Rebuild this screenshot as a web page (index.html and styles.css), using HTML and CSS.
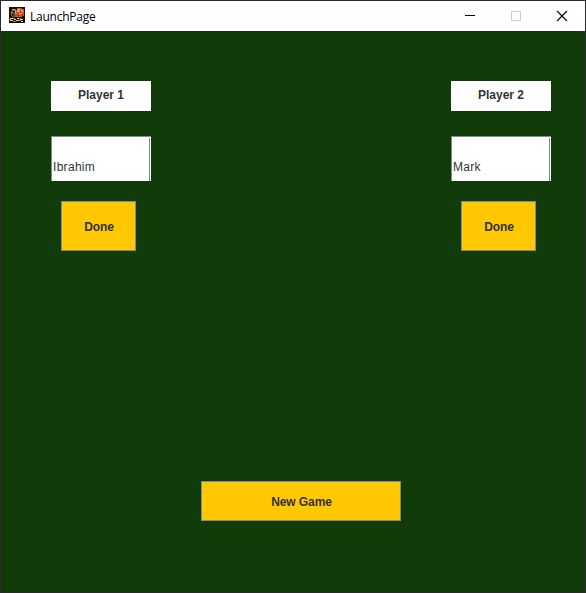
FILE: index.html
```html
<!DOCTYPE html>
<html lang="en">
<head>
<meta charset="utf-8">
<title>LaunchPage</title>
<link rel="stylesheet" href="styles.css">
</head>
<body>
<div class="window">
  <header class="titlebar">
    <svg class="app-icon" width="16" height="16" viewBox="0 0 16 16" shape-rendering="crispEdges">
      <path fill="#15110c" d="M0 0h16v16H0z"/>
      <path fill="#75593d" d="M3 2h4v1h1v6H7v1H3V9H2V4h1z"/>
      <path fill="#302c24" d="M4 4h2v2H4zM3 7h2v2H3z"/>
      <path fill="#d9a077" d="M3 2h3v1H3zM6 3h1v4H6zM2 5h1v1H2z"/>
      <path fill="#d4522c" d="M8 1h5v1h2v7h-2v1H7V4h1z"/>
      <path fill="#f09b6c" d="M8 2h3v3H8zM12 3h2v2h-2zM10 6h3v1h-3z"/>
      <path fill="#8d2815" d="M11 4h1v2h-1zM8 8h2v1H8zM13 7h1v2h-1z"/>
      <path fill="#e4d3a4" d="M1 11h3v1H1zM5 12h2v1H5zM8 11h2v1H8zM11 12h3v1h-3zM1 13h3v1H1zM7 13h3v1H7zM12 14h2v1h-2z"/>
      <path fill="#978759" d="M0 12h2v1H0zM4 11h2v1H4zM10 11h2v1h-2zM4 14h3v1H4zM10 13h2v1h-2z"/>
    </svg>
    <span class="title">LaunchPage</span>
    <div class="controls">
      <svg width="10" height="10" shape-rendering="crispEdges"><path d="M0 4.5h10" stroke="#000"/></svg>
      <svg width="10" height="10" shape-rendering="crispEdges"><path d="M.5.5h9v9h-9z" fill="none" stroke="#ccc"/></svg>
      <svg width="10" height="10"><path d="M0 0l10 10M10 0L0 10" stroke="#000" stroke-width="1.1"/></svg>
    </div>
  </header>
  <main class="content">
    <div class="players">
      <section class="player">
        <div class="label">Player 1</div>
        <div class="field">Ibrahim</div>
        <button class="btn done">Done</button>
      </section>
      <section class="player">
        <div class="label">Player 2</div>
        <div class="field">Mark</div>
        <button class="btn done">Done</button>
      </section>
    </div>
    <button class="btn new-game">New Game</button>
  </main>
</div>
</body>
</html>
```
FILE: styles.css
```css
* { box-sizing: border-box; }
body { margin: 0; overflow: hidden; }
.window {
  width: 586px;
  height: 593px;
  border: 1px solid #2b2b2b;
  display: flex;
  flex-direction: column;
  background: #123b0a;
}
.titlebar {
  height: 30px;
  flex: none;
  display: flex;
  align-items: center;
  background: #fff;
  padding: 0 18px 0 8px;
}
.app-icon { margin-right: 5px; margin-top: -2px; }
.title { font: 12px/16px "Open Sans", "Noto Sans", sans-serif; color: #000; letter-spacing: -0.25px; margin-top: 1px; }
.controls { margin-left: auto; margin-top: -1px; display: flex; gap: 36px; }
.controls svg { display: block; overflow: visible; }
.content {
  flex: 1;
  display: flex;
  flex-direction: column;
  justify-content: space-between;
  align-items: flex-start;
  padding: 50px 34px 71px 50px;
  font: 12px/14px "Liberation Sans", Arial, sans-serif;
  color: #333;
}
.players { width: 500px; display: flex; justify-content: space-between; }
.player { width: 100px; display: flex; flex-direction: column; }
.label {
  height: 30px;
  padding-top: 7px;
  background: #fff;
  font-weight: bold;
  text-align: center;
}
.field {
  height: 45px;
  margin: 25px 0 20px;
  padding: 23px 0 0 1px;
  background: linear-gradient(#7a8a99, #7a8a99) 97px 1px / 1px 100% no-repeat #fff;
  border: solid #7a8a99;
  border-width: 1px 0 0 1px;
  letter-spacing: 0.3px;
}
.btn {
  padding: 2px 0 0 1px;
  background: #ffc800;
  border: 1px solid #7a8a99;
  font: bold 12px/14px "Liberation Sans", Arial, sans-serif;
  letter-spacing: -0.1px;
  color: #333;
}
.done { width: 75px; height: 50px; margin-left: 10px; }
.new-game { width: 200px; height: 40px; margin-left: 150px; }
```
